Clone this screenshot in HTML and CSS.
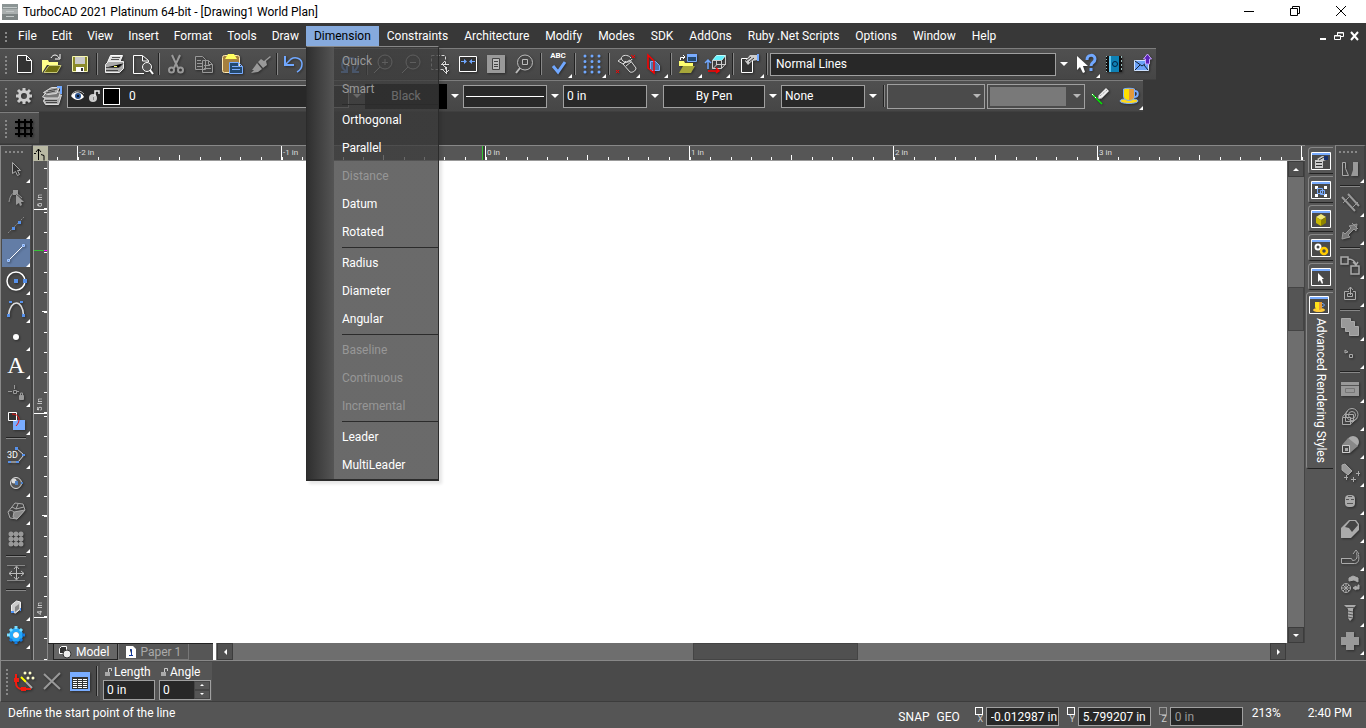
FILE: index.html
```
<!DOCTYPE html>
<html lang="en">
<head>
    <meta charset="UTF-8">
    <meta name="viewport" content="width=device-width, initial-scale=1.0">
    <title>TurboCAD 2021 Platinum 64-bit - [Drawing1 World Plan]</title>
    <link rel="stylesheet" href="styles.css">
</head>
<body>
    <header class="titlebar">
        <svg class="app-icon" width="16" height="16" viewBox="0 0 16 16"><path fill="#8b9494" d="M0 0h16v5H0z"/><path fill="#a9afaf" d="M0 5h16v5H0z"/><path fill="#7d8585" d="M0 10h16v6H0z"/><path stroke="#c3c9c9" d="M1 3.500h14M4 7.500h8M4 12.500h8"/></svg>
        <h1>TurboCAD 2021 Platinum 64-bit - [Drawing1 World Plan]</h1>
        <div class="window-buttons">
            <button type="button" aria-label="Minimize"><svg width="12" height="12"><path stroke="#000" d="M1 6.500h10"/></svg></button>
            <button type="button" aria-label="Restore"><svg width="12" height="12" fill="none" stroke="#000"><path d="M1.500 3.500h7v7h-7zM3.500 3V1.500h7v7H9"/></svg></button>
            <button type="button" aria-label="Close"><svg width="12" height="12" stroke="#000"><path d="M1 1l10 10M11 1L1 11"/></svg></button>
        </div>
    </header>

    <nav class="menubar">
        <span class="grip"></span>
        <div class="menu-group">
            <button type="button">File</button>
            <button type="button">Edit</button>
            <button type="button">View</button>
            <button type="button">Insert</button>
            <button type="button">Format</button>
            <button type="button">Tools</button>
            <button type="button">Draw</button>
        </div>
        <div class="menu-holder">
            <button type="button" class="open">Dimension</button>
            <div class="menu">
                <button type="button" class="fading">Quick</button>
                <button type="button" class="fading">Smart</button>
                <hr>
                <button type="button">Orthogonal</button>
                <button type="button">Parallel</button>
                <button type="button" disabled>Distance</button>
                <button type="button">Datum</button>
                <button type="button">Rotated</button>
                <hr>
                <button type="button">Radius</button>
                <button type="button">Diameter</button>
                <button type="button">Angular</button>
                <hr>
                <button type="button" disabled>Baseline</button>
                <button type="button" disabled>Continuous</button>
                <button type="button" disabled>Incremental</button>
                <hr>
                <button type="button">Leader</button>
                <button type="button">MultiLeader</button>
            </div>
        </div>
        <button type="button">Constraints</button>
        <button type="button">Architecture</button>
        <button type="button">Modify</button>
        <button type="button">Modes</button>
        <button type="button">SDK</button>
        <button type="button">AddOns</button>
        <button type="button">Ruby .Net Scripts</button>
        <button type="button">Options</button>
        <button type="button">Window</button>
        <button type="button">Help</button>
        <div class="doc-buttons">
            <button type="button" aria-label="Minimize drawing"><svg width="10" height="10"><path fill="#fff" d="M2 7h6v2H2z"/></svg></button>
            <button type="button" aria-label="Restore drawing"><svg width="10" height="10" fill="none" stroke="#fff"><path d="M.5 4.500h6v4h-6zM.5 5h6M3.500 4V1.500h6v4H7M3 2h6"/></svg></button>
            <button type="button" aria-label="Close drawing"><svg width="10" height="10" stroke="#fff" stroke-width="2"><path d="M1 1l7 8M8 1L1 9"/></svg></button>
        </div>
    </nav>

    <div class="toolbar">
        <span class="grip"></span>
        <button type="button" class="tool" aria-label="New"><svg viewBox="0 0 24 24"><path fill="#333" stroke="#fff" d="M5.500 3.500h9l5 5v12h-14zM14.500 3.500v5h5"/></svg></button>
        <button type="button" class="tool" aria-label="Open"><svg viewBox="0 0 24 24"><path fill="#ffff8c" d="M2 8h6l1 2h9v3H7l-5 8z"/><path fill="#6f6f10" stroke="#c6c67a" d="M4 20.500L9 13.500h12l-4 7z"/><path fill="none" stroke="#fff" d="M11 6c2-4 6-4 8 0M20 2v5h-5"/></svg></button>
        <button type="button" class="tool" aria-label="Save"><svg viewBox="0 0 24 24"><path fill="#8a8a2a" stroke="#f5f5b0" d="M4.500 4.500h15v15h-15z"/><path fill="#c9c9c9" d="M7 5h10v7H7z"/><path fill="#fff" d="M8 15h8v5H8z"/><path fill="#333" d="M13 16h2v3h-2z"/></svg></button>
        <span class="sep"></span>
        <button type="button" class="tool" aria-label="Print"><svg viewBox="0 0 24 24"><path fill="#ddd" stroke="#fff" d="M8.500 3.500h12l-3 7h-12z"/><path stroke="#555" d="M10 5.500h8M9 7.500h8"/><path fill="#aaa" stroke="#eee" d="M3.500 12.500l3-3h15v7l-4 4h-14z"/><path stroke="#444" d="M4 15.500h13l4-4M4 18.500h12"/><path stroke="#ffff70" d="M12 14.500h3"/></svg></button>
        <button type="button" class="tool" aria-label="Print preview"><svg viewBox="0 0 24 24"><path fill="none" stroke="#fff" d="M14 21.500H3.500v-18h9l6 5V10M12.500 4v5h6"/><circle cx="17" cy="15" r="4.500" fill="#555" stroke="#fff"/><path stroke="#fff" stroke-width="2" d="M20 18l3 4"/></svg></button>
        <span class="sep"></span>
        <button type="button" class="tool" aria-label="Cut"><svg viewBox="0 0 24 24" fill="none" stroke="#999" stroke-width="2"><path d="M8 3l6 13M16 3l-6 13"/><circle cx="7.500" cy="18" r="2.500"/><circle cx="16.500" cy="18" r="2.500"/></svg></button>
        <button type="button" class="tool" aria-label="Copy"><svg viewBox="0 0 24 24" fill="#444" stroke="#999"><path d="M3.500 4.500h7l3 3v10h-10zM10.500 8.500h6l4 4v8h-10zM5 8.500h4M5 11.500h5M5 14.500h5M12 13.500h6M12 16.500h7M16.500 8.500v4h4"/></svg></button>
        <button type="button" class="tool" aria-label="Paste"><svg viewBox="0 0 24 24"><rect x="2.500" y="3.500" width="17" height="17" rx="2" fill="#a5803f" stroke="#ffe9b0"/><path fill="#ffff60" d="M8 2h6l3 5H5z"/><path fill="#24496e" stroke="#79acff" d="M9.500 10.500h9l4 4v7h-13zM12 14.500h6M12 17.500h8M18.500 10.500v4h4"/></svg></button>
        <button type="button" class="tool" aria-label="Format painter"><svg viewBox="0 0 24 24"><path fill="#999" d="M22 4l-6 5-3-2-3 3 5 6 4-3-1-4 5-4zM9 11l5 6-4 3-7 1 3-3-2 0 3-4z"/></svg></button>
        <span class="sep"></span>
        <button type="button" class="tool" aria-label="Undo"><svg viewBox="0 0 24 24" fill="none" stroke="#71a8ff"><path stroke-width="2" d="M3 4v9h9"/><path stroke-width="1.500" d="M3 13l6-6c5-3 11 0 11 5 0 4-3 7-5 8"/></svg></button>
        <button type="button" class="tool" aria-label="Undo list"></button>
        <button type="button" class="tool" aria-label="Redo"><svg viewBox="0 0 24 24" fill="none" stroke="#71a8ff" stroke-width="2"><path d="M8 19C1 15 4 6 12 6s11 8 4 13M9 14v6H3M15 14v6h6"/></svg></button>
        <span class="sep"></span>
        <button type="button" class="tool" aria-label="Zoom in"><svg viewBox="0 0 24 24" fill="none" stroke="#ccc"><circle cx="13" cy="10" r="7"/><path d="M10 10.500h6M13 7v6M8 15l-6 6"/></svg></button>
        <button type="button" class="tool" aria-label="Zoom out"><svg viewBox="0 0 24 24" fill="none" stroke="#ccc"><circle cx="13" cy="10" r="7"/><path d="M10 10.500h6M8 15l-6 6"/></svg></button>
        <button type="button" class="tool" aria-label="Zoom window"><svg viewBox="0 0 24 24" fill="none" stroke="#ddd"><path stroke-dasharray="3 2" d="M3.500 3.500h14v14h-14z"/><path d="M13 12.500h8M17 9l-3 3 3 3M18.500 15v7M15 18l3 3 3-3"/></svg></button>
        <button type="button" class="tool" aria-label="Zoom extents"><svg viewBox="0 0 24 24"><path fill="#333" stroke="#fff" d="M3.500 4.500h17v15h-17z"/><path stroke="#71a8ff" stroke-width="1" d="M5 9.500h4M15 9.500h4"/><path fill="#71a8ff" d="M8 7l3 2.500-3 2.500zM16 7l-3 2.500 3 2.500z"/></svg></button>
        <button type="button" class="tool" aria-label="Zoom page"><svg viewBox="0 0 24 24"><path fill="#999" d="M3 3h18v18H3z"/><path fill="#bbb" stroke="#444" d="M8.500 6.500h7v11h-7zM10 9.500h4M10 12.500h4M10 14.500h4"/></svg></button>
        <button type="button" class="tool" aria-label="Zoom selection"><svg viewBox="0 0 24 24" fill="none" stroke="#bbb"><circle cx="13" cy="10.500" r="7.500"/><path d="M10.500 7.500h5v5h-5z"/><path stroke-width="2" d="M8 16l-4 5"/></svg></button>
        <span class="sep"></span>
        <button type="button" class="tool more spell" aria-label="Spelling"><b>ABC</b><svg viewBox="0 0 24 24"><path fill="none" stroke="#71a8ff" stroke-width="3" d="M7 14l5 6 7-10"/></svg></button>
        <span class="sep"></span>
        <button type="button" class="tool more" aria-label="Snap grid"><svg viewBox="0 0 24 24"><path stroke="#71a8ff" stroke-width="3" stroke-linecap="round" stroke-dasharray="0 7" d="M5 4h15M5 9.500h15M5 15h15M5 20h15"/></svg></button>
        <span class="sep"></span>
        <button type="button" class="tool more" aria-label="Workplane by entity"><svg viewBox="0 0 24 24" fill="none" stroke="#ddd"><path d="M9 12l7-4 6 8c0 3-4 5-6 4zM12 14l5-4M17 6c-4-5-12-2-9 2s9 2 10-1M8 6l-4 3 5 3 3-3"/><path stroke="#f00" d="M17 3l4 3M21 3l-3 3M2 18l3 3M5 18l-3 3"/></svg></button>
        <button type="button" class="tool more" aria-label="Facet edit"><svg viewBox="0 0 24 24" fill="none"><path fill="#4f76a8" stroke="#79acff" d="M8.500 9.500h5l4 4v5h-9z"/><path stroke="#f00" stroke-width="1.500" d="M6 3v13l6 5V9z"/></svg></button>
        <span class="sep"></span>
        <button type="button" class="tool more" aria-label="Insert file"><svg viewBox="0 0 24 24"><path fill="#24496e" stroke="#79acff" d="M11.500 2.500h9v7h-9z"/><path fill="#79acff" d="M11 2h10v3H11z"/><path fill="#ffff70" d="M3 9h5l1 2h8v3H3z"/><path fill="#a7a73a" d="M3 21l4-7h12l-4 7z"/><path stroke="#fff" fill="none" d="M4.500 8V5.500h4M7 3l2 2-2 2"/></svg></button>
        <button type="button" class="tool more" aria-label="Coordinate system"><svg viewBox="0 0 24 24" fill="none" stroke="#ccc"><path fill="#62f1ff" stroke="#bff" d="M8.500 8.500l4-5h9l-4 5z"/><path d="M8.500 8.500h9v8h-9zM21.500 4v8l-4 4.500M12.500 9v4l-4 4M13 12.500h9"/><path stroke="#71a8ff" stroke-width="1.500" d="M4 17V9M1 11l3-3 3 3"/><path stroke="#f00" stroke-width="1.500" d="M4 19h11M12 16l3 3-3 2"/></svg></button>
        <span class="sep"></span>
        <button type="button" class="tool more" aria-label="Properties"><svg viewBox="0 0 24 24"><path fill="#333" stroke="#fff" d="M3.500 6.500h11v14h-11z"/><path fill="#ccc" d="M7 9l5-6h8v5l-6 1-4 4z"/><path stroke="#333" d="M8 9l5-4M11 10l5-4"/><path fill="#71a8ff" d="M19 2h2v7h-2z"/></svg></button>
        <span class="sep"></span>
        <label class="combo style-combo"><select aria-label="Line style"><option>Normal Lines</option></select><i class="arrow"></i></label>
        <button type="button" class="tool more" aria-label="Help pointer"><svg viewBox="0 0 24 24"><path fill="#fff" d="M3 4v14l3-3 3 6 2-1-2-6h5z"/><path fill="none" stroke="#71a8ff" stroke-width="3" d="M13 8c0-6 8-6 8-1 0 4-4 3-4 7M17 16v3"/></svg></button>
        <button type="button" class="tool" aria-label="Help book"><svg viewBox="0 0 24 24"><path fill="#0e81b5" d="M6 4h11v16H6z"/><path stroke="#111" stroke-width="3" d="M5.500 4v16"/><path stroke="#9bb" stroke-dasharray="1 2" d="M4.500 4v16"/><path stroke="#61c8f2" stroke-width="2" d="M8 4v16"/><path fill="#111" d="M17 4h3v16h-3z"/><path stroke="#9bb" stroke-dasharray="2 2" d="M19.500 4v16"/><circle cx="13" cy="12" r="2.500" fill="none" stroke="#024"/></svg></button>
        <button type="button" class="tool" aria-label="Send mail"><svg viewBox="0 0 24 24"><path fill="#6ba2f8" stroke="#cfe2ff" d="M4.500 8.500h14v10h-14z"/><path stroke="#123" fill="none" d="M5 9l7 5 7-5M5 18l5-5M18 18l-4-5"/><path fill="#5a22b8" stroke="#c8a7ff" d="M17.500 2l4 5h-2v5h-4V7h-2z"/></svg></button>
    </div>

    <div class="toolbar">
        <span class="grip"></span>
        <button type="button" class="tool" aria-label="Settings"><svg viewBox="0 0 24 24"><circle cx="12" cy="12" r="4.500" fill="none" stroke="#ccc" stroke-width="3"/><path stroke="#ccc" stroke-width="3" d="M12 4v3M12 17v3M4 12h3M17 12h3M6 6l3 3M15 15l3 3M18 6l-3 3M9 15l-3 3"/></svg></button>
        <button type="button" class="tool" aria-label="Layers"><svg viewBox="0 0 24 24" fill="#aaa" stroke="#ddd"><path d="M3.500 17l3-6h15l-3 9.500h-13z"/><path d="M2.500 13l4-5h14l-2 6H6z" fill="#777"/><path d="M3.500 8.500l8-5h8l-3 6-9 1z"/><path stroke="#444" d="M6 9l9-2M8 7l9-2M5 16.500h12M6 18.500h11"/><path fill="none" stroke="#71a8ff" stroke-width="2" d="M17 3h4v7"/></svg></button>
        <div class="combo layer-combo">
            <div class="layer-box">
                <svg width="14" height="12" viewBox="0 0 14 12"><path fill="#fff" d="M0 6c3-5 10-5 13 1-4 4-9 4-13-1z"/><circle cx="7" cy="6" r="3" fill="#28508c"/><circle cx="7" cy="6" r="1" fill="#000"/><path stroke="#aaa" fill="none" d="M1 4c3-4 9-4 12 0"/></svg>
                <svg width="12" height="14" viewBox="0 0 12 14"><circle cx="5" cy="9" r="4" fill="#ccc"/><path fill="none" stroke="#eee" stroke-width="1.500" d="M7 7V2h4v3"/><path stroke="#888" d="M5.500 8v3"/></svg>
                <span class="swatch"></span>
                <select aria-label="Layer"><option>0</option></select>
            </div>
            <i class="arrow"></i>
        </div>
        <label class="combo color-combo"><select aria-label="Pen color"><option>Black</option></select><i class="arrow"></i></label>
        <label class="combo line-combo"><select aria-label="Line pattern"><option></option></select><i class="arrow"></i></label>
        <label class="combo width-combo"><select aria-label="Line width"><option>0 in</option></select><i class="arrow"></i></label>
        <label class="combo pen-combo"><select aria-label="Brush color"><option>By Pen</option></select><i class="arrow"></i></label>
        <label class="combo brush-combo"><select aria-label="Brush pattern"><option>None</option></select><i class="arrow"></i></label>
        <span class="sep"></span>
        <label class="combo inner"><select disabled aria-label="Dimension style"></select><i class="arrow"></i></label>
        <label class="combo inner filled"><select disabled aria-label="Material"></select><i class="arrow"></i></label>
        <button type="button" class="tool" aria-label="Pick style"><svg viewBox="0 0 24 24"><path stroke="#0e0" stroke-width="1.500" d="M3 10l10 10"/><path stroke="#fff" stroke-dasharray="2 2" d="M3 10l4 4"/><path fill="#eee" stroke="#999" d="M9 14l1-3 7-7 3 3-7 7-3 1z"/><path stroke="#888" stroke-dasharray="1 1" d="M11 12l7-6"/></svg></button>
        <button type="button" class="tool more" aria-label="Render style"><svg viewBox="0 0 24 24"><ellipse cx="12" cy="17" rx="9" ry="2.500" fill="#ffd91c" stroke="#79acff"/><path fill="#ffe000" stroke="#79acff" d="M6.500 5v7c0 6 11 6 11 0V5c-3-1-8-1-11 0z"/><path fill="#e39a3c" d="M12 5h5v7c0 3-3 4-5 4z"/><path fill="none" stroke="#79acff" stroke-width="2" d="M17 7c5-1 5 6 0 6"/></svg></button>
    </div>

    <div class="toolbar small">
        <span class="grip"></span>
        <button type="button" class="tool" aria-label="Grid"><svg viewBox="0 0 24 24" stroke="#000" stroke-width="2"><path d="M7 3v18M13 3v18M19 3v18M3 6h18M3 12h18M3 18h18"/></svg></button>
    </div>

    <main class="workspace">
        <div class="side-tools side-left">
            <span class="grip"></span>
            <button type="button" class="tool more" aria-label="Select"><svg viewBox="0 0 24 24"><path fill="#333" stroke="#aaa" d="M8.500 5.500v11l3-2 2 4 2-1-2-4h3z"/></svg></button>
            <button type="button" class="tool" aria-label="Edit node"><svg viewBox="0 0 24 24"><path fill="none" stroke="#999" d="M5 17c1-7 4-9 6-10l7 6"/><path fill="#999" d="M9 5h5v5H9zM12 9v11l3-2 1 3 2-1-1-3h3z"/></svg></button>
            <button type="button" class="tool more" aria-label="Construction line"><svg viewBox="0 0 24 24"><path stroke="#888" stroke-dasharray="2 1" d="M4 20L20 4"/><path fill="#5791ea" d="M8 14h3v3H8zM14 8h3v3h-3z"/></svg></button>
            <button type="button" class="tool more active" aria-label="Line"><svg viewBox="0 0 24 24"><path stroke="#fff" d="M5 19L19 5"/><path fill="#5791ea" stroke="#a8c9ff" d="M3.500 18.500h2v2h-2zM18.500 3.500h2v2h-2z"/></svg></button>
            <button type="button" class="tool more" aria-label="Circle"><svg viewBox="0 0 24 24"><circle cx="12" cy="12" r="9" fill="none" stroke="#fff" stroke-width="1.500"/><path fill="#5791ea" d="M10 10h4v4h-4zM19 10h4v4h-4z"/></svg></button>
            <button type="button" class="tool more" aria-label="Curve"><svg viewBox="0 0 24 24"><path fill="none" stroke="#ddd" stroke-width="1.500" d="M4.500 18c2-16 14-16 15 0"/><path fill="#5791ea" d="M3 17h3v3H3zM18 17h3v3h-3zM5 4h3v2H5zM16 4h3v2h-3z"/></svg></button>
            <button type="button" class="tool more" aria-label="Point"><svg viewBox="0 0 24 24"><circle cx="12" cy="12" r="3" fill="#fff"/></svg></button>
            <button type="button" class="tool more letter" aria-label="Text">A</button>
            <button type="button" class="tool more" aria-label="Constraint"><svg viewBox="0 0 24 24" fill="none" stroke="#999"><path d="M4 10.500h4M13 10.500h2M10.500 4v4M9.500 9.500h3v3h-3z"/><path fill="#999" d="M15.500 14.500h4v4h-4z"/><path d="M16.500 14v-2h2v2"/></svg></button>
            <button type="button" class="tool more" aria-label="Copy entity"><svg viewBox="0 0 24 24"><path fill="#79acff" d="M9 11h12v10H9z"/><path fill="#333" stroke="#fff" d="M4.500 3.500h8v8h-8z"/><path fill="none" stroke="#e11" d="M8 5c8 0 9 7 4 12"/></svg></button>
            <span class="sep"></span>
            <button type="button" class="tool more polyline" aria-label="3D polyline"><small>3D</small><svg viewBox="0 0 24 24"><path fill="none" stroke="#ddd" d="M12 5l8 7-6 7H5"/><path fill="#5791ea" d="M11 4h3v3h-3zM18 11h3v2h-3zM12 18h3v2h-3zM4 18h3v2H4z"/></svg></button>
            <button type="button" class="tool more" aria-label="Sphere"><svg viewBox="0 0 24 24"><circle cx="12" cy="12" r="5.500" fill="#555" stroke="#ddd"/><circle cx="10" cy="10" r="2.500" fill="#ddd"/><path fill="#4d7fc4" d="M11 10h3v4h-3zM17 11h2v2h-2z"/></svg></button>
            <button type="button" class="tool more" aria-label="Surface"><svg viewBox="0 0 24 24" fill="none" stroke="#aaa"><path fill="#444" d="M4 13l7-9 8 1 2 6-8 9-7-1z"/><path fill="#888" d="M10 13l11-2-8 9-4-2z"/><path d="M4 13c2-2 4-2 6 0M8 8l4 2 2-5M12 10l8-2"/></svg></button>
            <button type="button" class="tool more" aria-label="Mesh"><svg viewBox="0 0 24 24"><path stroke="#999" stroke-width="5" stroke-linecap="round" stroke-dasharray="0 5" d="M7 7h11M7 12h11M7 17h11"/></svg></button>
            <span class="sep"></span>
            <button type="button" class="tool more" aria-label="Move"><svg viewBox="0 0 24 24" fill="none" stroke="#bbb"><path stroke="#888" d="M3 4.500h18M3 19.500h18"/><path d="M12.500 6v12M5 12.500h15M10 8l2.500-3L15 8M10 16l2.500 3 2.500-3M8 10l-3 2.500L8 15M17 10l3 2.500-3 2.500"/></svg></button>
            <span class="sep"></span>
            <button type="button" class="tool more" aria-label="Box"><svg viewBox="0 0 24 24"><path fill="#ccc" stroke="#eee" d="M7.500 10l5-4 4 1v7l-5 4-4-1z"/><path fill="#888" d="M11 12l4-3v5l-4 3z"/><path fill="#4f93f5" d="M7 16h3v2H7zM16 13h1v3h-1z"/></svg></button>
            <button type="button" class="tool more" aria-label="Options"><svg viewBox="0 0 24 24"><circle cx="12" cy="12" r="5" fill="none" stroke="#25a9fa" stroke-width="4"/><path stroke="#79dcff" stroke-width="3" d="M12 3v3M3 12h3M6 6l2 2M18 6l-2 2"/><path stroke="#147ce0" stroke-width="3" d="M12 18v3M18 12h3M16 16l2 2M8 16l-2 2"/><circle cx="12" cy="12" r="3" fill="#fff"/></svg></button>
        </div>

        <div class="view">
            <button type="button" class="origin" aria-label="Relocate origin"><svg width="13" height="14" fill="none" stroke="#000"><path d="M5.500 13V2M3 5l2.500-3L8 5M1 6.500h2M8 7.500l3 1v5"/></svg></button>
            <div class="ruler-x">
                <span class="lead"></span>
                <span class="inch">-2 in</span>
                <span class="inch">-1 in</span>
                <span class="inch zero">0 in</span>
                <span class="inch">1 in</span>
                <span class="inch">2 in</span>
                <span class="inch">3 in</span>
                <span class="inch"></span>
            </div>
            <div class="ruler-y">
                <span class="inch first">6 in</span>
                <span class="inch">5 in</span>
                <span class="inch">4 in</span>
                <span class="tail"></span>
                <i class="cursor-mark"></i>
            </div>
            <div class="canvas"></div>
            <div class="scroll-y">
                <button type="button" aria-label="Scroll up"><i class="tri up"></i></button>
                <span class="thumb"></span>
                <button type="button" aria-label="Scroll down"><i class="tri down"></i></button>
            </div>
            <div class="sheets">
                <button type="button" class="current"><svg width="14" height="14" viewBox="0 0 14 14"><path fill="#333" stroke="#fff" d="M1.500 3.500l2-2h5v5l-2 2h-5z"/><circle cx="9" cy="9" r="4" fill="#eee" stroke="#333"/></svg>Model</button>
                <button type="button"><svg width="10" height="12" viewBox="0 0 10 12"><path fill="#fff" d="M0 0h7l3 3v9H0z"/><path stroke="#123a9c" d="M3 9.500h4M5.500 9V3.500H4"/></svg>Paper 1</button>
            </div>
            <div class="scroll-x">
                <button type="button" aria-label="Scroll left"><i class="tri prev"></i></button>
                <span class="thumb"></span>
                <button type="button" aria-label="Scroll right"><i class="tri next"></i></button>
            </div>
        </div>

        <div class="palettes">
            <button type="button" aria-label="Selection info"><svg viewBox="0 0 20 20"><path class="frame" d="M.5 1.500h19v17H.5z"/><path class="bar" d="M1 2h18v2H1z"/><path fill="#ccc" d="M4 9h8v8H4zM6 8l5-3h4v4l-5 2z"/><path stroke="#333" d="M5 11.500h6M5 14.500h6M8 9l5-3"/><path fill="#17306e" d="M13 5h4v4h-4z"/></svg></button>
            <button type="button" aria-label="Blocks"><svg viewBox="0 0 20 20"><path class="frame" d="M.5 1.500h19v17H.5z"/><path class="bar" d="M1 2h18v2H1z"/><path fill="#fff" d="M4 6h3v3H4zM13 6h3v3h-3zM4 14h3v3H4zM13 14h3v3h-3z"/><path fill="none" stroke="#79acff" d="M6.500 8.500h5v5h-5zM9.500 10.500h4v4h-4z"/></svg></button>
            <button type="button" aria-label="Library"><svg viewBox="0 0 20 20"><path class="frame" d="M.5 1.500h19v17H.5z"/><path class="bar" d="M1 2h18v2H1z"/><path fill="#f1e77a" d="M10 5l5 3-5 3-5-3z"/><path fill="#c9ba00" d="M5 8l5 3v6l-5-3z"/><path fill="#8f8500" d="M15 8l-5 3v6l5-3z"/></svg></button>
            <button type="button" aria-label="Design director"><svg viewBox="0 0 20 20"><path class="frame" d="M.5 1.500h19v17H.5z"/><path class="bar" d="M1 2h18v2H1z"/><circle cx="7" cy="9" r="2.500" fill="none" stroke="#fff" stroke-width="2"/><circle cx="13" cy="13" r="3" fill="none" stroke="#fc0" stroke-width="2.500"/></svg></button>
            <button type="button" aria-label="Selector"><svg viewBox="0 0 20 20"><path class="frame" d="M.5 1.500h19v17H.5z"/><path class="bar" d="M1 2h18v2H1z"/><path fill="#fff" d="M7 6v9l2-2 2 4 1-1-1-4h2z"/></svg></button>
            <button type="button" class="wide"><svg viewBox="0 0 20 20"><path class="frame" d="M.5 1.500h19v17H.5z"/><path class="bar" d="M1 2h18v2H1z"/><ellipse cx="10" cy="15" rx="6" ry="2" fill="#ffcb3c"/><path fill="#ffe11a" d="M6 7h7v5c-1 4-6 4-7 0z"/><path fill="#e79b34" d="M10 7h3v5c0 2-1 3-3 3z"/><path fill="none" stroke="#79acff" d="M13 8.500c3 0 3 3 0 3"/></svg><span>Advanced Rendering Styles</span></button>
        </div>

        <div class="side-tools side-right">
            <span class="grip"></span>
            <button type="button" class="tool more" aria-label="Edit tool"><svg viewBox="0 0 24 24"><path fill="none" stroke="#aaa" d="M4.500 5.500v13h6l-3-7v-6z"/><path fill="#999" d="M15 5h5v14h-7l2-6z"/></svg></button>
            <span class="sep"></span>
            <button type="button" class="tool more" aria-label="Trim"><svg viewBox="0 0 24 24" stroke="#999"><path stroke-width="2" d="M4 6l13 14M10 3l11 12"/><path d="M5 12l6-6M14 17l6-6"/></svg></button>
            <button type="button" class="tool more" aria-label="Stretch"><svg viewBox="0 0 24 24" fill="#777" stroke="#999"><path d="M4 20l1-7 2 2 6-6-2-2 8-2-1 7-2-2-6 6 2 2zM14 4l6 6"/></svg></button>
            <span class="sep"></span>
            <button type="button" class="tool more" aria-label="Transform"><svg viewBox="0 0 24 24" fill="none" stroke="#aaa" stroke-width="1.500"><path d="M3 4h7v7H3zM13 13h8v8h-8zM10 6c5 0 7 2 8 6M15 9l3 3 2-3"/></svg></button>
            <button type="button" class="tool more" aria-label="Extrude"><svg viewBox="0 0 24 24" fill="none" stroke="#aaa"><path d="M11 10.500H6.500v8h11v-8H15M9.500 12.500h5v3h-5zM12.500 14V6M10 9l2.500-3L15 9"/></svg></button>
            <span class="sep"></span>
            <button type="button" class="tool more" aria-label="Union"><svg viewBox="0 0 24 24" fill="#999" stroke="#aaa"><path d="M3.500 3.500h9v3h4v5h4v9h-9v-4h-4v-4h-4z"/></svg></button>
            <button type="button" class="tool more" aria-label="Align"><svg viewBox="0 0 24 24" fill="none" stroke="#aaa"><path d="M11.500 11.500h3v3h-3zM7 7l3 2-3 1z"/></svg></button>
            <span class="sep"></span>
            <button type="button" class="tool more" aria-label="Table"><svg viewBox="0 0 24 24"><path fill="#999" d="M3 5h18v14H3z"/><path stroke="#555" d="M3 8.500h18"/><path fill="none" stroke="#777" d="M7.500 11.500h9v4h-9z"/></svg></button>
            <button type="button" class="tool more" aria-label="Intersect"><svg viewBox="0 0 24 24" fill="none" stroke="#aaa"><circle cx="14" cy="9.500" r="6"/><circle cx="14" cy="10" r="3.500"/><path d="M4.500 12.500h8v7h-8zM7.500 9.500h8v7h-8zM4.500 12l5-6M12.500 19l7-6"/></svg></button>
            <button type="button" class="tool more" aria-label="Subtract"><svg viewBox="0 0 24 24"><circle cx="15" cy="9" r="6" fill="#aaa"/><path fill="#888" d="M10 5l10 8-8 7H4v-8z"/><path fill="#444" stroke="#ccc" d="M4.500 12.500h7v7h-7z"/><path fill="#aaa" d="M7 15h3v3H7z"/></svg></button>
            <button type="button" class="tool more" aria-label="Spray"><svg viewBox="0 0 24 24" fill="#999" stroke="#aaa"><path d="M4 4l3-1 7 7-4 4-6-5zM6 16.500h4M8.500 14v5M13 18.500h5M15.500 16v5M18 12.500h4M20.500 10v5"/></svg></button>
            <button type="button" class="tool more" aria-label="Cylinder"><svg viewBox="0 0 24 24"><rect x="7" y="6" width="10" height="12" rx="4" fill="#aaa"/><path stroke="#555" d="M8 10.500h3M13 10.500h3M9 14.500h6M10 7.500h4"/></svg></button>
            <button type="button" class="tool more" aria-label="Bevel"><svg viewBox="0 0 24 24"><path fill="#aaa" d="M3 11l8-8h7l3 4v6l-8 8H3z"/><path fill="#444" d="M12 4h5l3 4-6 7-3-4-4-1z"/></svg></button>
            <button type="button" class="tool more" aria-label="Sweep"><svg viewBox="0 0 24 24" fill="none" stroke="#aaa"><path d="M3.500 13.500h10l1 2c5 0 5-4 4-8M3.500 18.500h13c4 0 5-4 4-9M3.500 13v5M15 9l3-4 3 4"/></svg></button>
            <button type="button" class="tool more" aria-label="Explode"><svg viewBox="0 0 24 24" fill="none" stroke="#aaa"><circle cx="8" cy="15" r="4.500"/><path fill="#aaa" d="M11 5l4-2 5 2v4l-4-2-5 1zM15 15l3-2v1h2v-2h1v4h-3v1z"/><path d="M8 11v9M4 15h9M5 12l6 6M11 12l-6 6"/></svg></button>
            <button type="button" class="tool more" aria-label="Screw"><svg viewBox="0 0 24 24" fill="#aaa"><path d="M6 4h12l-3 4v9l-3 3-2-3V8z"/><path stroke="#555" d="M8 6.500h8M10 10l5 1M10 13l5 1M10 16l5 1"/></svg></button>
            <button type="button" class="tool more" aria-label="Add"><svg viewBox="0 0 24 24"><path fill="#999" d="M8 3h8v5h5v8h-5v5H8v-5H3V8h5z"/></svg></button>
        </div>
    </main>

    <section class="inspector">
        <span class="grip"></span>
        <button type="button" class="tool" aria-label="Finish"><svg viewBox="0 0 24 24"><path fill="none" stroke="#f31c10" stroke-width="2" d="M4 5v9c0 3 2 6 6 6h9"/><path fill="#f31c10" d="M2 9h5v4H2zM9 18h5v4H9z"/><path stroke="#ff0" stroke-width="2" d="M9 8l5 5"/><path stroke="#aaa" stroke-width="2" d="M14 13l6 6"/><path stroke="#ffc" stroke-width="3" stroke-linecap="round" stroke-dasharray="0 5" d="M13 4h8M16 9h7"/></svg></button>
        <button type="button" class="tool" aria-label="Cancel"><svg viewBox="0 0 24 24" stroke="#999" stroke-width="2"><path d="M4 5l16 15M20 4L4 20"/></svg></button>
        <button type="button" class="tool" aria-label="Table view"><svg viewBox="0 0 24 24"><path fill="#333" stroke="#79acff" stroke-width="2" d="M3 4h18v17H3z"/><path fill="#79acff" d="M3 4h18v4H3z"/><path stroke="#fff" stroke-dasharray="4 1" d="M5 10.500h14M5 12.500h14M5 14.500h14M5 16.500h14M5 18.500h14"/></svg></button>
        <span class="sep"></span>
        <div class="fields">
            <div class="field">
                <label for="length"><svg width="8" height="10" viewBox="0 0 8 10"><path fill="#aaa" d="M1 5h5v4H1z"/><path fill="none" stroke="#ccc" d="M4.500 5V1.500h3V4"/></svg>Length</label>
                <input type="text" id="length" value="0 in">
            </div>
            <div class="field">
                <label for="angle"><svg width="8" height="10" viewBox="0 0 8 10"><path fill="#aaa" d="M1 5h5v4H1z"/><path fill="none" stroke="#ccc" d="M4.500 5V1.500h3V4"/></svg>Angle</label>
                <div class="spin">
                    <input type="text" id="angle" value="0">
                    <button type="button" aria-label="Increase"><i class="tri up"></i></button>
                    <button type="button" aria-label="Decrease"><i class="tri down"></i></button>
                </div>
            </div>
        </div>
    </section>

    <footer class="statusbar">
        <p>Define the start point of the line</p>
        <button type="button">SNAP</button>
        <button type="button">GEO</button>
        <label class="coord"><span><i></i>X</span><input type="text" value="-0.012987 in"></label>
        <label class="coord"><span><i></i>Y</span><input type="text" value="5.799207 in"></label>
        <label class="coord off"><span><i></i>Z</span><input type="text" value="0 in" disabled></label>
        <span class="zoom">213%</span>
        <span class="clock">2:40 PM</span>
    </footer>
</body>
</html>
```
FILE: styles.css
```
* {
    box-sizing: border-box;
}
body {
    margin: 0;
    height: 100vh;
    display: flex;
    flex-direction: column;
    overflow: hidden;
    background-color: #383838;
    color: white;
    font-family: Roboto, "Noto Sans", sans-serif;
    font-size: 12px;
    line-height: 16px;
}
button, input, select {
    margin: 0;
    padding: 0;
    border: none;
    border-radius: 0;
    background: none;
    color: inherit;
    font: inherit;
}
svg {
    display: block;
    flex: none;
}

/* Title bar */
.titlebar {
    display: flex;
    align-items: center;
    height: 23px;
    flex: none;
    padding-left: 2px;
    background: white;
    color: black;
}
h1 {
    margin: 0 auto 0 5px;
    font-size: 12px;
    font-weight: normal;
}
.window-buttons {
    display: flex;
    height: 21px;
    padding-right: 2px;
    align-self: flex-start;
}
.window-buttons button {
    width: 46px;
    display: flex;
    align-items: center;
    justify-content: center;
}

/* Menu bar */
.menubar {
    display: flex;
    height: 25px;
    flex: none;
    padding: 3px 0 2px;
}
.menubar button {
    padding: 0 8px;
    white-space: nowrap;
}
.menu-group {
    display: flex;
}
.menubar .menu-group button {
    padding-right: 7px;
}
.menu-holder {
    position: relative;
    display: flex;
}
.menubar .open {
    background: #86aadd;
    color: black;
}
.menu {
    position: absolute;
    top: 20px;
    left: 0;
    z-index: 5;
    width: 133px;
    padding-left: 27px;
    border: 1px solid #2b2b2b;
    border-top-color: #888;
    border-bottom-width: 2px;
    background: linear-gradient(to right, #2f2f2f, #555) left / 27px 100% no-repeat, linear-gradient(rgba(61, 61, 61, 0.77), rgba(61, 61, 61, 0.77)) 27px 0 no-repeat;
    box-shadow: 3px 3px 3px rgba(0, 0, 0, 0.1);
}
.menu button {
    display: block;
    width: 100%;
    height: 28px;
    text-align: left;
}
.menu button:disabled {
    color: #979797;
}
.menu .fading {
    color: #999;
}
.menu hr {
    margin: 1px 0 1px 8px;
    border: none;
    height: 1px;
    background: #2b2b2b;
}
.doc-buttons {
    display: flex;
    margin-left: auto;
    padding-right: 3px;
}
.doc-buttons button {
    width: 16px;
    padding: 0 3px;
}

/* Toolbars */
.grip {
    width: 10px;
    flex: none;
    background: repeating-linear-gradient(to bottom, transparent 0 2px, #888 2px 4px) 5px 4px / 2px calc(100% - 8px) no-repeat;
}
.toolbar {
    display: flex;
    align-items: center;
    align-self: flex-start;
    height: 32px;
    flex: none;
    border-top: 1px solid #7d7d7d;
    border-bottom: 1px solid #3f3f3f;
    background: linear-gradient(to bottom, #505050, #464646);
}
.toolbar.small {
    width: 39px;
    margin-bottom: 1px;
}
.toolbar .grip {
    height: 28px;
}
.tool {
    position: relative;
    width: 28px;
    height: 28px;
    flex: none;
    display: flex;
    align-items: center;
    justify-content: center;
}
.tool svg {
    width: 24px;
    height: 24px;
    filter: drop-shadow(1px 1px 1px rgba(0, 0, 0, 0.4));
}
.more::after {
    content: "";
    position: absolute;
    right: 0;
    bottom: 0;
    border: 2px solid transparent;
    border-right-color: white;
    border-bottom-color: white;
}
.tool.active {
    background: #637da6;
}
.spell b {
    position: absolute;
    top: 1px;
    left: 0;
    width: 28px;
    font-size: 8px;
    line-height: 10px;
}
.letter {
    font-family: "Liberation Serif", serif;
    font-size: 24px;
}
.polyline small {
    position: absolute;
    left: 5px;
    top: 8px;
    font-size: 9px;
    line-height: 12px;
}
.sep {
    width: 6px;
    height: 22px;
    flex: none;
    background: linear-gradient(to right, #222 50%, #888 50%) 2px 0 / 2px 100% no-repeat;
}

/* Drop-downs */
.combo {
    display: flex;
    align-items: center;
}
.combo select {
    appearance: none;
    height: 23px;
    padding: 0 3px;
    border: 1px solid #a0a0a0;
    background: #282828;
}
.arrow {
    width: 16px;
    flex: none;
}
.arrow::before {
    content: "";
    display: block;
    margin: 0 auto;
    width: 0;
    border: 4px solid transparent;
    border-top-color: white;
    border-bottom-width: 0;
}
.style-combo select {
    width: 286px;
    padding-left: 5px;
}
.layer-combo {
    padding-left: 1px;
}
.layer-box {
    display: flex;
    align-items: center;
    gap: 3px;
    width: 282px;
    height: 23px;
    padding-left: 3px;
    border: 1px solid #a0a0a0;
    background: #282828;
}
.layer-combo select {
    flex: 1;
    height: 20px;
    padding-left: 6px;
    border: none;
}
.swatch {
    width: 17px;
    height: 17px;
    border: 1px solid white;
    background: black;
}
.color-combo select {
    width: 82px;
    height: 25px;
    border: none;
    background: black;
    text-align: center;
}
.line-combo select {
    width: 84px;
    background: linear-gradient(white, white) center / 78px 1px no-repeat #282828;
}
.width-combo select,
.brush-combo select {
    width: 84px;
}
.pen-combo select {
    width: 102px;
    text-align: center;
}
.inner {
    position: relative;
    margin-right: 2px;
}
.inner select {
    width: 98px;
    height: 25px;
    background: #4b4b4b;
    opacity: 1;
}
.inner .arrow {
    position: absolute;
    right: 0;
    opacity: 0.6;
}
.combo.filled select {
    background: linear-gradient(#797979, #797979) 2px 2px / 76px 19px no-repeat #4b4b4b;
}

/* Work area */
.workspace {
    display: flex;
    flex: 1;
    min-height: 0;
    background: #565656;
    border-bottom: 1px solid #888;
}
.side-tools {
    display: flex;
    flex-direction: column;
    flex: none;
    background: #4b4b4b;
    border-left: 1px solid #888;
    border-top: 1px solid #7d7d7d;
}
.side-left {
    width: 33px;
    padding-left: 1px;
    border-right: 2px solid #404040;
}
.side-right {
    width: 31px;
    border-right: 2px solid #404040;
}
.side-tools .grip {
    width: 20px;
    height: 9px;
    margin-left: 3px;
    background: repeating-linear-gradient(to right, #888 0 2px, transparent 2px 4px) 0 5px / 20px 2px no-repeat;
}
.side-tools .sep {
    width: 20px;
    height: 6px;
    margin-left: 4px;
    background: linear-gradient(#222 50%, #888 50%) 0 2px / 100% 2px no-repeat;
}
.view {
    display: grid;
    flex: 1;
    min-width: 0;
    grid-template-columns: 15px 165px 1fr 18px;
    grid-template-rows: 15px 1fr 17px;
    border-top: 1px solid #888;
}
.origin {
    background: #b9b9a3;
}
.ruler-x {
    grid-column: 2 / 5;
    display: flex;
    overflow: hidden;
    border-bottom: 1px solid #999;
    font-size: 8px;
    line-height: 14px;
    color: #ddd;
}
.ruler-x .lead {
    width: 29px;
    flex: none;
    background: repeating-linear-gradient(to left, transparent 0 19px, white 19px 20px) bottom / 100% 3px no-repeat;
}
.ruler-x .inch {
    width: 204px;
    flex: none;
    padding-left: 1px;
    border-left: 1px solid white;
    background:
        linear-gradient(white, white) 50% 100% / 1px 5px no-repeat,
        repeating-linear-gradient(to right, white 0 1px, transparent 1px 10%) bottom / 100% 3px no-repeat;
}
.ruler-x .zero {
    box-shadow: -2px 0 0 #3c3c3c, -3px 0 0 #35c435;
}
.ruler-y {
    grid-row: 2 / 4;
    position: relative;
    display: flex;
    flex-direction: column;
    overflow: hidden;
    border-left: 1px solid #999;
    border-right: 1px solid #888;
    font-size: 8px;
    line-height: 12px;
    color: #ddd;
}
.ruler-y .inch {
    height: 204px;
    flex: none;
    writing-mode: vertical-rl;
    transform: rotate(180deg);
    padding-top: 2px;
    border-top: 1px solid white;
    background:
        linear-gradient(white, white) 0 50% / 5px 1px no-repeat,
        repeating-linear-gradient(to bottom, white 0 1px, transparent 1px 20px) left / 3px 100% no-repeat;
}
.ruler-y .first {
    height: 49px;
    background: repeating-linear-gradient(to bottom, white 0 1px, transparent 1px 20px) left / 3px 100% no-repeat;
}
.ruler-y .tail {
    flex: 1;
    background: repeating-linear-gradient(to bottom, transparent 0 20px, white 20px 21px) right / 3px 100% no-repeat;
}
.cursor-mark {
    position: absolute;
    top: 89px;
    left: 0;
    z-index: 1;
    width: 100%;
    height: 1px;
    background: linear-gradient(to right, #35c435 75%, #f0f 75%);
}
.canvas {
    grid-column: 2 / 4;
    background: white;
    border-left: 1px solid #777;
}
.scroll-y {
    display: flex;
    flex-direction: column;
    width: 17px;
    margin-left: 1px;
    background: #6e6e6e;
    border-right: 1px solid #444;
}
.scroll-y button,
.scroll-x button {
    width: 16px;
    flex: none;
    display: flex;
    align-items: center;
    justify-content: center;
    border: 1px solid #3c3c3c;
    background: #505050;
}
.scroll-y button {
    height: 16px;
}
.scroll-y .thumb {
    height: 44px;
    margin: 110px 0 auto;
    border: 1px solid #444;
    background: #555;
}
.tri {
    border: 3px solid transparent;
}
.tri.up { border-bottom-color: white; border-top-width: 0; }
.tri.down { border-top-color: white; border-bottom-width: 0; }
.tri.prev { border-right-color: white; border-left-width: 0; }
.tri.next { border-left-color: white; border-right-width: 0; }
.sheets {
    display: flex;
    padding-left: 5px;
    border-top: 1px solid #222;
}
.sheets button {
    display: flex;
    align-items: center;
    gap: 4px;
    height: 16px;
    padding: 0 8px 0 4px;
    border: 1px solid #777;
    border-top: none;
    color: #aaa;
}
.sheets .current {
    background: #666;
    border-color: #222;
    color: white;
}
.sheets button + button {
    padding: 0 7px;
}
.scroll-x {
    display: flex;
    margin-right: 1px;
    padding-left: 1px;
    border-left: 3px solid white;
    background: #6e6e6e;
}
.scroll-x .thumb {
    width: 165px;
    margin: 0 auto 0 43%;
    background: #505050;
    border: 1px solid #444;
}

/* Docked palettes */
.palettes {
    width: 30px;
    flex: none;
    padding: 2px 2px 0 3px;
}
.palettes button {
    display: flex;
    width: 25px;
    height: 27px;
    margin-bottom: 2px;
    padding: 3px 2px;
    border: 1px solid #888;
    border-right: none;
    border-bottom-color: #222;
    border-radius: 4px 0 0 3px;
}
.palettes svg {
    width: 20px;
    height: 20px;
}
.frame {
    fill: #4a4a4a;
    stroke: white;
}
.bar {
    fill: #79acff;
}
.palettes .wide {
    flex-direction: column;
    gap: 3px;
    width: 27px;
    height: 177px;
    margin-left: -2px;
    padding-top: 2px;
}
.wide span {
    writing-mode: vertical-rl;
    line-height: 20px;
    white-space: nowrap;
}

/* Inspector bar */
.inspector {
    display: flex;
    align-items: center;
    height: 41px;
    flex: none;
    border-left: 1px solid #888;
    border-bottom: 1px solid #3c3c3c;
    background: #4a4a4a;
}
.inspector .grip {
    width: 9px;
    height: 36px;
}
.inspector .sep {
    height: 30px;
}
.fields {
    display: flex;
    gap: 4px;
    padding: 2px 1px 1px 3px;
    background: #555;
}
.field label {
    display: flex;
    align-items: center;
    gap: 2px;
    height: 16px;
    padding-left: 1px;
}
.field > input,
.spin {
    width: 52px;
    height: 20px;
    border: 1px solid #a0a0a0;
    background: #282828;
}
.field > input {
    display: block;
    padding-left: 3px;
}
.spin {
    display: grid;
    grid-template-columns: 1fr 16px;
}
.spin input {
    grid-row: 1 / 3;
    width: 34px;
    padding-left: 3px;
}
.spin button {
    display: flex;
    align-items: center;
    justify-content: center;
    border: 1px solid #444;
    background: #555;
}
.spin .tri {
    border-width: 2px;
}
.spin .up {
    border-top-width: 0;
}
.spin .down {
    border-bottom-width: 0;
}

/* Status bar */
.statusbar {
    display: flex;
    align-items: center;
    height: 26px;
    flex: none;
    padding: 0 14px 0 8px;
    background: #555;
}
.statusbar p {
    margin: 0 auto 4px 0;
}
.statusbar button {
    margin: 4px 7px 0 0;
}
.coord {
    display: flex;
    margin: 3px 0 0 8px;
}
.coord span {
    width: 11px;
    font-size: 9px;
    line-height: 9px;
    text-align: center;
    color: #ccc;
}
.coord i {
    display: block;
    width: 8px;
    height: 8px;
    border: 1px solid white;
}
.coord input {
    width: 73px;
    height: 19px;
    padding-left: 4px;
    border: 1px solid #a0a0a0;
    background: #282828;
}
.off i {
    border-color: #999;
}
.off input {
    color: #999;
}
.zoom,
.clock {
    margin: 0 0 4px 9px;
}
.clock {
    margin-left: 27px;
}
```
